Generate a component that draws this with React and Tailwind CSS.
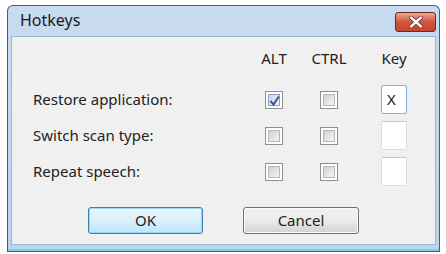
import React from "react";

function CheckBox({ checked }) {
  return (
    <div className="relative w-[18px] h-[18px] border border-[#8e8f8f] bg-white p-[2px]">
      <div
        className={`w-full h-full border ${
          checked
            ? "border-[#8d9fc4] bg-gradient-to-br from-[#c9d4ea] to-[#f2f5fb]"
            : "border-[#b4b7bb] bg-gradient-to-br from-[#cfd1d4] to-[#f5f5f5]"
        }`}
      />
      {checked && (
        <svg className="absolute inset-0" width="18" height="18" viewBox="0 0 18 18">
          <path d="M4.5 9 L7.5 12.5 L12.8 4.5" fill="none" stroke="#3b5896" strokeWidth="2" />
        </svg>
      )}
    </div>
  );
}

function KeyBox({ value, focused }) {
  return (
    <div
      className={`w-[26px] h-[29px] rounded-[2px] border bg-white flex items-center pl-[5px] text-[15px] text-[#222]  ${
        focused ? "border-[#7fb2e0]" : "border-[#dcdcdc] border-t-[#c8c8c8]"
      }`}
    >
      {value}
    </div>
  );
}

const rows = [
  { label: "Restore application:", alt: true, ctrl: false, key: "X", focused: true },
  { label: "Switch scan type:", alt: false, ctrl: false, key: "" },
  { label: "Repeat speech:", alt: false, ctrl: false, key: "" },
];

export default function App() {
  return (
    <div className="w-[446px] h-[254px] bg-white pl-[7px] pt-[5px] font-['Noto_Sans','Open_Sans',sans-serif] text-[#222]">
      <div className="w-[433px] h-[247px] rounded-t-[6px] border border-[#4e5c6c] border-b-[#2f6f86] bg-gradient-to-b from-[#c8dbf0] to-[#bcd3ec] shadow-[inset_0_-2px_0_#7ccfe0] flex flex-col px-[3px] pb-[6px]">
        <div className="h-[30px] flex items-center justify-between pl-[9px]">
          <span className="text-[16px] text-[#1a1a1a] mt-[-2px]">Hotkeys</span>
          <div className="w-[41px] h-[20px] mt-[2px] rounded-[3px] border border-[#6b2a23] bg-gradient-to-b from-[#e9a99a] via-[#d2543f] to-[#c8472f] flex items-center justify-center">
            <svg width="18" height="12" viewBox="0 0 18 12">
              <path d="M4 1.5 L14 10.5 M14 1.5 L4 10.5" stroke="#5d2017" strokeWidth="3.8" strokeLinecap="round" />
              <path d="M4 1.5 L14 10.5 M14 1.5 L4 10.5" stroke="#ffffff" strokeWidth="2.4" strokeLinecap="round" />
            </svg>
          </div>
        </div>
        <div className="flex-1 bg-[#f0f0f0] border border-[#9fb6d0] text-[15px] flex flex-col pt-[11px]">
          <div className="h-[20px] flex items-center pl-[21px]">
            <div className="w-[223px]" />
            <div className="w-[36px] text-center">ALT</div>
            <div className="w-[36px] ml-[19px] text-center">CTRL</div>
            <div className="w-[30px] ml-[32px] text-center">Key</div>
          </div>
          <div className="flex flex-col gap-[7px] mt-[17px]">
            {rows.map((r) => (
              <div key={r.label} className="h-[29px] flex items-center pl-[21px]">
                <div className="w-[223px]">{r.label}</div>
                <div className="w-[36px] flex justify-center">
                  <CheckBox checked={r.alt} />
                </div>
                <div className="w-[36px] ml-[19px] flex justify-center">
                  <CheckBox checked={r.ctrl} />
                </div>
                <div className="w-[30px] ml-[32px] flex justify-center">
                  <KeyBox value={r.key} focused={r.focused} />
                </div>
              </div>
            ))}
          </div>
          <div className="flex gap-[40px] pl-[76px] mt-[21px]">
            <button className="w-[115px] h-[27px] rounded-[3px] border border-[#3c7fb1] bg-gradient-to-b from-[#eaf6fd] via-[#d9f0fc] to-[#bee6fd] shadow-[inset_0_0_0_1px_#9ed7f5] text-[15px]">
              OK
            </button>
            <button className="w-[116px] h-[27px] rounded-[3px] border border-[#707070] bg-gradient-to-b from-[#f2f2f2] via-[#ebebeb] to-[#d2d2d2] shadow-[inset_0_0_0_1px_#fbfbfb] text-[15px]">
              Cancel
            </button>
          </div>
        </div>
      </div>
    </div>
  );
}
